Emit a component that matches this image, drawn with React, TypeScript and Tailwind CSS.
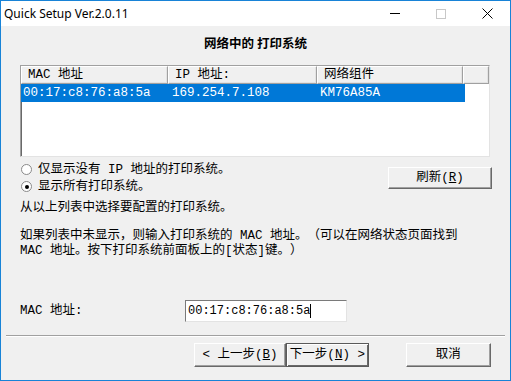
import React from 'react';

const bodyFont = { fontFamily: '"Liberation Mono", "Noto Sans CJK SC", monospace' };

const Radio: React.FC<{ checked?: boolean; label: string }> = ({ checked, label }) => (
  <div className="flex items-center h-[17px]">
    <div className="ml-[1px] w-[11px] h-[11px] rounded-full border border-[#8a8a8a] bg-white flex items-center justify-center">
      {checked && <div className="w-[4px] h-[4px] rounded-full bg-black" />}
    </div>
    <span className="ml-[6px]">{label}</span>
  </div>
);

const WinButton: React.FC<{ children: React.ReactNode; className?: string; isDefault?: boolean }> = ({ children, className = '', isDefault }) => (
  <div
    className={`flex items-center justify-center bg-[#f0f0f0] ${
      isDefault
        ? 'border border-[#5a5a5a] shadow-[inset_1px_1px_0_#ffffff,inset_-1px_-1px_0_#696969]'
        : 'border-t border-l border-t-white border-l-white border-r border-b border-r-[#696969] border-b-[#696969] shadow-[inset_-1px_-1px_0_#a0a0a0]'
    } ${className}`}
  >
    {children}
  </div>
);

const HeaderCell: React.FC<{ w: string; children?: React.ReactNode }> = ({ w, children }) => (
  <div className={`${w} h-full shrink-0 flex items-center pl-[6px] bg-[#f0f0f0] border-t border-l border-t-white border-l-white border-r border-b border-r-[#a0a0a0] border-b-[#a0a0a0] shadow-[inset_-1px_-1px_0_#e3e3e3]`}>
    {children}
  </div>
);

export default function App() {
  return (
    <div className="w-[511px] h-[381px] border border-[#1883d7] bg-[#f0f0f0] flex flex-col overflow-hidden text-black">
      {/* title bar */}
      <div className="h-[25px] shrink-0 bg-white flex items-center">
        <span className="pl-[3px] text-[12px] flex-1" style={{ fontFamily: '"Noto Sans", sans-serif' }}>
          Quick Setup Ver.2.0.11
        </span>
        <div className="w-[46px] h-full flex items-center justify-center">
          <div className="w-[10px] h-px bg-black" />
        </div>
        <div className="w-[46px] h-full flex items-center justify-center">
          <div className="w-[10px] h-[10px] border border-[#c8c8c8]" />
        </div>
        <div className="w-[46px] h-full flex items-center justify-center">
          <svg width="11" height="11" viewBox="0 0 11 11">
            <path d="M0.5 0.5 L10.5 10.5 M10.5 0.5 L0.5 10.5" stroke="#000" strokeWidth="1" />
          </svg>
        </div>
      </div>

      {/* body */}
      <div className="flex-1 flex flex-col px-[19px] text-[12.5px] [text-spacing-trim:space-all]" style={bodyFont}>
        <div className="mt-[9px] h-[16px] leading-[16px] text-center font-bold" style={{ fontFamily: '"Noto Sans CJK SC", sans-serif' }}>
          网络中的 打印系统
        </div>

        {/* list view */}
        <div className="mt-[14px] w-[470px] h-[92px] shrink-0 bg-white border border-t-[#a0a0a0] border-l-[#a0a0a0] border-b-[#e3e3e3] border-r-[#e3e3e3] shadow-[inset_1px_1px_0_#696969] overflow-hidden">
          <div className="h-[18px] flex">
            <HeaderCell w="w-[147px]">MAC 地址</HeaderCell>
            <HeaderCell w="w-[149px]">IP 地址:</HeaderCell>
            <HeaderCell w="w-[146px]">网络组件</HeaderCell>
            <HeaderCell w="w-[26px]" />
          </div>
          <div className="h-[18px] w-[444px] bg-[#0078d7] text-white flex items-center">
            <span className="w-[147px] pl-[2px]">00:17:c8:76:a8:5a</span>
            <span className="w-[149px] pl-[4px]">169.254.7.108</span>
            <span className="pl-[3px]">KM76A85A</span>
          </div>
        </div>

        {/* options */}
        <div className="flex">
          <div className="flex flex-col mt-[4px] leading-[16px]">
            <Radio label="仅显示没有 IP 地址的打印系统。" />
            <Radio checked label="显示所有打印系统。" />
            <div className="mt-[5px] h-[16px]">从以上列表中选择要配置的打印系统。</div>
          </div>
          <WinButton className="ml-auto -mr-[1px] mt-[10px] w-[104px] h-[22px]">
            刷新(<span className="underline">R</span>)
          </WinButton>
        </div>

        <p className="mt-[13px] leading-[15px]">
          如果列表中未显示，则输入打印系统的 MAC 地址。（可以在网络状态页面找到
          <br />
          MAC 地址。按下打印系统前面板上的[状态]键。）
        </p>

        {/* mac entry */}
        <div className="mt-[41px] h-[22px] flex items-center">
          <span className="w-[165px]">MAC 地址:</span>
          <div className="w-[162px] h-[22px] bg-white border border-t-[#7a7a7a] border-l-[#7a7a7a] border-b-[#e3e3e3] border-r-[#e3e3e3] flex items-center pl-[2px]">
            <span className="text-[12px]">00:17:c8:76:a8:5a</span>
            <span className="w-px h-[14px] bg-black" />
          </div>
        </div>

        <div className="mt-[13px] -mx-[14px] border-t border-t-[#a0a0a0] border-b border-b-white" />

        {/* nav buttons */}
        <div className="mt-[6px] flex">
          <WinButton className="ml-[174px] w-[95px] h-[24px]">
            &lt; 上一步(<span className="underline">B</span>)
          </WinButton>
          <WinButton isDefault className="w-[85px] h-[24px]">
            下一步(<span className="underline">N</span>) &gt;
          </WinButton>
          <WinButton className="ml-[37px] w-[88px] h-[24px]">取消</WinButton>
        </div>
      </div>
    </div>
  );
}
